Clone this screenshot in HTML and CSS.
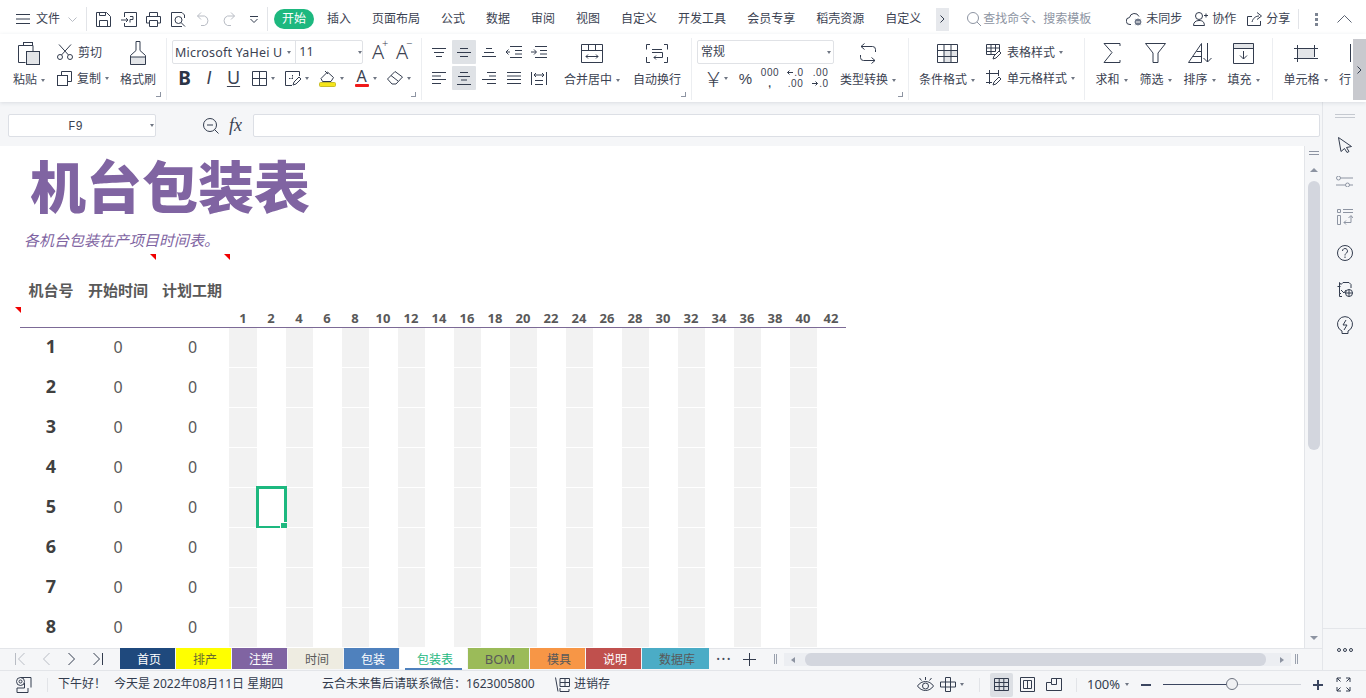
FILE: index.html
```html
<!DOCTYPE html>
<html lang="zh-CN">
<head>
<meta charset="utf-8">
<title>机台包装表</title>
<link rel="stylesheet" href="styles.css">
</head>
<body>
<div class="app">
  <header class="topbar">
    <svg class="i" width="14" height="10" viewBox="0 0 14 10"><path d="M0 .5h14M0 5h14M0 9.500h14"/></svg>
    <span class="file">文件</span>
    <svg class="i lite chev" width="9" height="5" viewBox="0 0 9 5"><path d="M.5.500l4 4 4-4"/></svg>
    <i class="vsep"></i>
    <div class="quick">
      <span class="q"><svg class="i" width="15" height="15" viewBox="0 0 15 15"><path d="M.5.500h10l4 4v10H.5zM3.500 14.500v-6h8v6M3.500.5v3h6v-3"/></svg></span>
      <span class="q"><svg class="i" width="16" height="15" viewBox="0 0 16 15"><path d="M3.500 5V.5h12v14h-12V11M0 8h7M5 6l2 2-2 2M9 4.500h3v3H9v3"/></svg></span>
      <span class="q"><svg class="i" width="15" height="15" viewBox="0 0 15 15"><path d="M3.500 4V.5h8V4M3.500 11H.5V4.500h14V11h-3M3.500 8.500h8v6h-8z"/></svg></span>
      <span class="q"><svg class="i" width="15" height="15" viewBox="0 0 15 15"><path d="M11 14.500H.5V.5h10.500l2.500 2.500v3"/><circle cx="7.500" cy="8" r="3.500"/><path d="M10 10.500l4 4"/></svg></span>
      <span class="q"><svg class="i lite" width="13" height="14" viewBox="0 0 13 14"><path d="M4 .5L.5 4 4 7.500M.5 4h7a5 5 0 0 1 0 9.500H4"/></svg></span>
      <span class="q"><svg class="i lite" width="13" height="14" viewBox="0 0 13 14"><path d="M9 .5L12.500 4 9 7.500M12.500 4h-7a5 5 0 0 0 0 9.500H9"/></svg></span>
      <span class="q"><svg class="i" width="8" height="7" viewBox="0 0 8 7"><path d="M0 .5h8M.5 3l3.500 3.500L7.500 3"/></svg></span>
    </div>
    <i class="vsep sep2"></i>
    <span class="pill">开始</span>
    <nav class="tabs-top">
      <span>插入</span><span>页面布局</span><span>公式</span><span>数据</span><span>审阅</span><span>视图</span><span>自定义</span><span>开发工具</span><span>会员专享</span><span>稻壳资源</span><span>自定义</span>
    </nav>
    <span class="more">
      <svg class="i" width="5" height="8" viewBox="0 0 5 8"><path d="M.5.500L4 4 .5 7.500"/></svg>
    </span>
    <div class="search">
      <svg class="i grey" width="14" height="14" viewBox="0 0 14 14"><circle cx="6" cy="6" r="5.500"/><path d="M10 10l4 4"/></svg>
      <span>查找命令、搜索模板</span>
    </div>
    <div class="share">
      <span class="act"><svg class="i" width="17" height="14" viewBox="0 0 17 14"><path d="M5 12.500H4a3.500 3.500 0 0 1-.5-7A5 5 0 0 1 13 4.500"/><circle class="solid" cx="12" cy="10" r="4"/><path class="wline" d="M10 10h4"/></svg><span>未同步</span></span>
      <span class="act act2"><svg class="i" width="15" height="14" viewBox="0 0 15 14"><circle cx="6" cy="4" r="3.500"/><path d="M.5 13.500c0-3 2-5 5.500-5s5 1 5.500 5zM11 3.500h4M13 1.500v4"/></svg><span>协作</span></span>
      <span class="act"><svg class="i" width="16" height="14" viewBox="0 0 16 14"><path d="M5 4.500H.5v9h13V9M5 10c1-4 4-6 7-6M10 .5l4.500 3.500L10 7.500"/></svg><span>分享</span></span>
    </div>
    <i class="vsep sep3"></i>
    <svg class="kebab" width="3" height="13" viewBox="0 0 3 13"><path d="M0 0h3v3H0zM0 5h3v3H0zM0 10h3v3H0z"/></svg>
    <svg class="i up" width="15" height="8" viewBox="0 0 15 8"><path d="M.5 7.500l7-7 7 7"/></svg>
  </header>

  <div class="ribbon">
    <section class="grp g-clip">
      <div class="big w-paste">
        <div class="big-ic"><svg class="i" width="22" height="23" viewBox="0 0 22 23"><path d="M5 3.500H.5v17h7M15 3.500V9"/><rect x="5.500" y=".5" width="9" height="3"/><rect class="tint" x="8.500" y="9.500" width="13" height="13"/></svg></div>
        <div class="big-lb">粘贴<b class="car"></b></div>
      </div>
      <div class="small-col w-copy">
        <div class="small"><svg class="i" width="16" height="16" viewBox="0 0 16 16"><circle cx="3" cy="13" r="2.500"/><circle cx="13" cy="13" r="2.500"/><path d="M4.500 11L14 .5M11.500 11L2 .5"/></svg><span>剪切</span></div>
        <div class="small"><svg class="i" width="15" height="15" viewBox="0 0 15 15"><path d="M4.500 4V.5h10v10H11"/><rect x=".5" y="4.500" width="10" height="10"/></svg><span>复制</span><b class="car"></b></div>
      </div>
      <div class="big w-brush">
        <div class="big-ic"><svg class="i" width="18" height="24" viewBox="0 0 18 24"><rect class="tint-b" x="1" y="16" width="16" height="8"/><path d="M7 .5h4v9l5.500 5v9H1.500v-9l5.500-5zM1.500 16h15"/></svg></div>
        <div class="big-lb">格式刷</div>
      </div>
      <i class="corner"></i>
    </section>

    <section class="grp g-font">
      <div class="line">
        <div class="combo combo-font">
          <span class="c-name">Microsoft YaHei U</span><b class="car"></b>
          <span class="c-size">11</span><b class="car"></b>
        </div>
        <span class="aa aa1">A<sup>+</sup></span>
        <span class="aa">A<sup>−</sup></span>
      </div>
      <div class="line tools">
        <span class="t t-b">B</span>
        <span class="t t-i">I</span>
        <span class="t t-u">U</span>
        <span class="t"><svg class="i" width="15" height="15" viewBox="0 0 15 15"><path d="M.5.500h14v14H.5zM7.500.5v14M.5 7.500h14"/></svg><b class="car"></b></span>
        <span class="t"><svg class="i" width="16" height="15" viewBox="0 0 16 15"><path d="M14.500 5V.5H.5v14H7"/><path d="M4 7.500h5M7.500 4v5" stroke-dasharray="1.500 1"/><path d="M8 14l1-3 5-5 2 2-5 5z"/></svg><b class="car"></b></span>
        <span class="t"><svg class="i" width="17" height="17" viewBox="0 0 17 17"><path d="M2 8.500L8.500 2l6 5.500-2.500 4H3.500zM6 1l3 3"/><rect class="yellow" x=".5" y="12.500" width="16" height="4" rx="1"/></svg><b class="car"></b></span>
        <span class="t"><span class="fc">A<i></i></span><b class="car"></b></span>
        <span class="t"><svg class="i" width="16" height="14" viewBox="0 0 16 14"><path d="M.5 8L8 .5 15.500 6 9 13H5zM4 4.500L11 10"/></svg><b class="car"></b></span>
      </div>
      <i class="corner"></i>
    </section>

    <section class="grp g-align">
      <div class="agrid">
        <span class="a"><svg class="i" width="14" height="9" viewBox="0 0 14 9"><path d="M0 .5h14M2 4.500h10M4 8.500h6"/></svg></span>
        <span class="a on"><svg class="i" width="14" height="9" viewBox="0 0 14 9"><path d="M3 .5h8M0 4.500h14M3 8.500h8"/></svg></span>
        <span class="a"><svg class="i" width="14" height="9" viewBox="0 0 14 9"><path d="M4 .5h6M2 4.500h10M0 8.500h14"/></svg></span>
        <span class="a"><svg class="i" width="16" height="12" viewBox="0 0 16 12"><path d="M4 .5h12M9 4.500h7M9 8h7M4 11.500h12M4 6H0M2.500 3.500L0 6l2.500 2.500"/></svg></span>
        <span class="a"><svg class="i" width="16" height="12" viewBox="0 0 16 12"><path d="M4 .5h12M9 4.500h7M9 8h7M4 11.500h12M0 6h5M3 3.500L5.500 6 3 8.500"/></svg></span>
        <span class="a"><svg class="i" width="14" height="12" viewBox="0 0 14 12"><path d="M0 .5h14M0 4h9M0 7.500h14M0 11.500h9"/></svg></span>
        <span class="a on"><svg class="i" width="14" height="13" viewBox="0 0 14 13"><path d="M3 .5h8M1 4.500h12M4 8h6M0 12.500h14"/></svg></span>
        <span class="a"><svg class="i" width="14" height="12" viewBox="0 0 14 12"><path d="M5 .5h9M7 4h7M0 7.500h14M5 11.500h9"/></svg></span>
        <span class="a"><svg class="i" width="14" height="12" viewBox="0 0 14 12"><path d="M0 .5h14M0 4h14M0 7.500h14M0 11.500h14"/></svg></span>
        <span class="a"><svg class="i" width="16" height="13" viewBox="0 0 16 13"><path d="M.5 0v13M15.500 0v13M4 12.500h8M4 8.500h8M3 3h10M5 1L3 3l2 2M11 1l2 2-2 2"/></svg></span>
      </div>
      <div class="big w-merge">
        <div class="big-ic"><svg class="i" width="22" height="19" viewBox="0 0 22 19"><path d="M.5.500h21v18H.5zM.5 6.500h21M7.500.5v6M14.500.5v6M5 12.500h12M7 10.500l-2 2 2 2M15 10.500l2 2-2 2"/></svg></div>
        <div class="big-lb">合并居中<b class="car"></b></div>
      </div>
      <div class="big w-wrap">
        <div class="big-ic"><svg class="i" width="22" height="19" viewBox="0 0 22 19"><path d="M4 .5H.5v5M18 .5h3.500v5M.5 13v5.500H4M21.500 13v5.500H18M6 5.500h10M6 8.500h10.500v5H8M10 11.500l-2 2 2 2"/></svg></div>
        <div class="big-lb">自动换行</div>
      </div>
      <i class="corner"></i>
    </section>

    <section class="grp g-num">
      <div class="num-left">
        <div class="combo combo-num"><span>常规</span><b class="car"></b></div>
        <div class="line numtools">
          <span class="t yen">￥<b class="car"></b></span>
          <span class="t pct">%</span>
          <span class="t stack s-k"><em>000</em><em>,</em></span>
          <span class="t stack"><em><svg class="i arr" width="6" height="5" viewBox="0 0 6 5"><path d="M6 2.500H.5M2.500.5l-2 2 2 2"/></svg>.0</em><em>.00</em></span>
          <span class="t stack"><em>.00</em><em><svg class="i arr" width="6" height="5" viewBox="0 0 6 5"><path d="M0 2.500h5.500M3.500.5l2 2-2 2"/></svg>.0</em></span>
        </div>
      </div>
      <div class="big w-conv">
        <div class="big-ic"><svg class="i" width="18" height="21" viewBox="0 0 18 21"><path d="M16.500 9V6.500a3 3 0 0 0-3-3H2M5.500.5l-3.500 3 3.500 3M1.500 12v2.500a3 3 0 0 0 3 3H16M12.500 14.500l3.500 3-3.500 3"/></svg></div>
        <div class="big-lb">类型转换<b class="car"></b></div>
      </div>
      <i class="corner"></i>
    </section>

    <section class="grp g-style">
      <div class="big w-cond">
        <div class="big-ic"><svg class="i" width="21" height="19" viewBox="0 0 21 19"><rect class="tint-b" x="7" y="6" width="14" height="6"/><rect class="tint-b" x="7" y="12" width="7" height="6"/><path d="M.5.500h20v18H.5zM.5 6.500h20M.5 12.500h20M7 .5v18M14 .5v18"/></svg></div>
        <div class="big-lb">条件格式<b class="car"></b></div>
      </div>
      <div class="small-col w-tstyle">
        <div class="small"><svg class="i" width="16" height="16" viewBox="0 0 16 16"><path d="M10 10.500H.5V.5h13v7M.5 4h13M.5 7.500h9M5 .5v10M9.500.5v7"/><path d="M7 15l1-3 5-5 2 2-5 5z"/></svg><span>表格样式</span><b class="car"></b></div>
        <div class="small"><svg class="i" width="16" height="16" viewBox="0 0 16 16"><path d="M3.500 0v14M0 3.500h12M12.500 0v6M0 12.500h6M7 15l1-3 5-5 2 2-5 5z"/></svg><span>单元格样式</span><b class="car"></b></div>
      </div>
    </section>

    <section class="grp g-edit">
      <div class="big w-edit">
        <div class="big-ic"><svg class="i" width="18" height="20" viewBox="0 0 18 20"><path d="M17 3V.5H1l8 9-8 10h16V17"/></svg></div>
        <div class="big-lb">求和<b class="car"></b></div>
      </div>
      <div class="big w-edit">
        <div class="big-ic"><svg class="i" width="21" height="20" viewBox="0 0 21 20"><path d="M.5.500h20L13 10v9.500H8V10z"/></svg></div>
        <div class="big-lb">筛选<b class="car"></b></div>
      </div>
      <div class="big w-edit">
        <div class="big-ic"><svg class="i" width="24" height="20" viewBox="0 0 24 20"><path d="M.5 19.500L13.500.5v19zM5 13.500h8M8.500 8.500h5M19.500 0v19M15.500 15l4 4 4-4"/></svg></div>
        <div class="big-lb">排序<b class="car"></b></div>
      </div>
      <div class="big w-edit">
        <div class="big-ic"><svg class="i" width="21" height="21" viewBox="0 0 21 21"><rect class="tint-b" x="0" y="0" width="21" height="5"/><path d="M.5.500h20v20H.5zM.5 5.500h20M10.500 8v8M7 12.500l3.500 3.500 3.500-3.500"/></svg></div>
        <div class="big-lb">填充<b class="car"></b></div>
      </div>
    </section>

    <section class="grp g-cell">
      <div class="big w-cell">
        <div class="big-ic"><svg class="i" width="24" height="17" viewBox="0 0 24 17"><rect class="tint-b" x="4" y="3" width="16" height="11"/><path d="M3.500 0v17M20.500 0v12M0 3.500h24M0 13.500h24"/></svg></div>
        <div class="big-lb">单元格<b class="car"></b></div>
      </div>
      <div class="big w-row">
        <div class="big-ic ic-left"><i class="rowbar"></i></div>
        <div class="big-lb">行</div>
      </div>
    </section>
    <span class="rib-next"><svg class="i" width="5" height="8" viewBox="0 0 5 8"><path d="M.5.500L4 4 .5 7.500"/></svg></span>
  </div>

  <div class="middle">
    <div class="work">
      <div class="fbar">
        <div class="namebox"><span>F9</span><b class="car"></b></div>
        <svg class="i f-zoom" width="16" height="16" viewBox="0 0 16 16"><circle cx="7" cy="7" r="6.500"/><path d="M4 7h6M11.500 11.500l4 4"/></svg>
        <span class="fx">fx</span>
        <div class="finput"></div>
      </div>

      <div class="sheetwrap">
        <main class="sheet">
          <h1 class="title">机台包装表</h1>
          <p class="subtitle">各机台包装在产项目时间表。</p>
          <i class="mark m1"></i><i class="mark m2"></i><i class="mark m3"></i>
          <div class="heads"><span>机台号</span><span>开始时间</span><span>计划工期</span></div>
          <div class="days">
            <span>1</span><span>2</span><span>4</span><span>6</span><span>8</span><span>10</span><span>12</span><span>14</span><span>16</span><span>18</span><span>20</span><span>22</span><span>24</span><span>26</span><span>28</span><span>30</span><span>32</span><span>34</span><span>36</span><span>38</span><span>40</span><span>42</span>
          </div>
          <div class="row"><b>1</b><span>0</span><span>0</span><i class="band"></i></div>
          <div class="row"><b>2</b><span>0</span><span>0</span><i class="band"></i></div>
          <div class="row"><b>3</b><span>0</span><span>0</span><i class="band"></i></div>
          <div class="row"><b>4</b><span>0</span><span>0</span><i class="band"></i></div>
          <div class="row"><b>5</b><span>0</span><span>0</span><i class="band"></i><i class="cursor"></i></div>
          <div class="row"><b>6</b><span>0</span><span>0</span><i class="band"></i></div>
          <div class="row"><b>7</b><span>0</span><span>0</span><i class="band"></i></div>
          <div class="row"><b>8</b><span>0</span><span>0</span><i class="band"></i></div>
        </main>
        <aside class="vbar">
          <i class="vhandle"></i>
          <i class="tri-up"></i>
          <i class="vthumb"></i>
          <i class="tri-down"></i>
        </aside>
      </div>

      <div class="tabbar">
        <div class="navs">
          <svg class="i lite" width="10" height="12" viewBox="0 0 10 12"><path d="M.5 0v12M9.500 0L3.500 6l6 6"/></svg>
          <svg class="i lite" width="7" height="12" viewBox="0 0 7 12"><path d="M6.500 0L.5 6l6 6"/></svg>
          <svg class="i" width="7" height="12" viewBox="0 0 7 12"><path d="M.5 0l6 6-6 6"/></svg>
          <svg class="i" width="10" height="12" viewBox="0 0 10 12"><path d="M9.500 0v12M.5 0l6 6-6 6"/></svg>
        </div>
        <div class="stabs">
          <span class="st s-navy">首页</span>
          <span class="st s-yellow">排产</span>
          <span class="st s-purple">注塑</span>
          <span class="st s-cream">时间</span>
          <span class="st s-blue">包装</span>
          <span class="st s-active">包装表</span>
          <span class="st s-green">BOM</span>
          <span class="st s-orange">模具</span>
          <span class="st s-red">说明</span>
          <span class="st s-teal">数据库</span>
        </div>
        <span class="tdots">···</span>
        <svg class="i addtab" width="13" height="13" viewBox="0 0 13 13"><path d="M6.500 0v13M0 6.500h13"/></svg>
        <i class="grip grip1"></i>
        <div class="hbar">
          <i class="tri-left"></i>
          <i class="hthumb"></i>
          <i class="tri-right"></i>
        </div>
        <i class="grip grip2"></i>
      </div>
    </div>

    <aside class="rpanel">
      <i class="rlines"></i>
      <span class="r"><svg class="i" width="14" height="16" viewBox="0 0 14 16"><path d="M.5.500l13 9-5 1 2.500 4-2 1-2.500-4-3.500 3z"/></svg></span>
      <span class="r"><svg class="i grey" width="17" height="11" viewBox="0 0 17 11"><circle cx="2.500" cy="2" r="2"/><circle cx="11.500" cy="9" r="2"/><path d="M4.500 2H17M0 9h9.500M13.500 9H17"/></svg></span>
      <span class="r"><svg class="i grey" width="16" height="16" viewBox="0 0 16 16"><path d="M.5.500h3v3h-3zM.5 6.500h3v9h-3zM6 .5h10M6 3.500h10M7 13.500h7V7M11.500 9L14 6.500 16 9M9 11.500l-2 2 2 2"/></svg></span>
      <span class="r"><svg class="i" width="16" height="16" viewBox="0 0 16 16"><circle cx="8" cy="8" r="7.500"/><path d="M5.500 6a2.500 2.500 0 1 1 4 2c-1 .7-1.500 1.300-1.500 2.500M8 11.500V13"/></svg></span>
      <span class="r"><svg class="i" width="16" height="16" viewBox="0 0 16 16"><path d="M4 12.500H2.500V1.500l1.500 2 2-2h6l2 2V7M.5 5.500h3M5 15.500H2.500v-3M4 9l3 3 2-3"/><circle cx="12" cy="12" r="3.500"/><path d="M12 8.500v7M8.500 12h7"/></svg></span>
      <span class="r"><svg class="i" width="16" height="18" viewBox="0 0 16 18"><path d="M5 15a7.500 7.500 0 1 1 6 0v2.500H5zM9 4L6 9h4l-3 5"/></svg></span>
      <div class="rfoot"><svg class="i" width="16" height="4" viewBox="0 0 16 4"><circle cx="2" cy="2" r="1.500"/><circle cx="8" cy="2" r="1.500"/><circle cx="14" cy="2" r="1.500"/></svg></div>
    </aside>
  </div>

  <footer class="status">
    <svg class="i s-icon" width="16" height="16" viewBox="0 0 16 16"><circle cx="4.500" cy="4.500" r="4"/><circle cx="4.500" cy="4.500" r="1.500"/><path d="M4.500.5H15v10M8.500 6v5H1v4.500h11V11"/></svg>
    <i class="vsep s1"></i>
    <span class="greet">下午好！</span>
    <span class="today">今天是 2022年08月11日 星期四</span>
    <span class="contact">云合未来售后请联系微信：1623005800</span>
    <svg class="i s-cart" width="15" height="15" viewBox="0 0 15 15"><path d="M.5.500L3 14.500M5 1.500h9.500v8H5zM10 1.500v8M5 5.500h9.500M5 11v3.500h9V12"/></svg>
    <span class="jxc">进销存</span>
    <div class="s-right">
      <svg class="i" width="17" height="15" viewBox="0 0 17 15"><path d="M.5 9c4-6 12-6 16 0-4 6-12 6-16 0z"/><circle cx="8.500" cy="9" r="3"/><path d="M8.500 0v3M2.500 1l2 2.500M14.500 1l-2 2.500"/></svg>
      <span class="cross"><svg class="i" width="16" height="15" viewBox="0 0 16 15"><path d="M5.500.5h5v4.500H15.500v5h-5v4.500h-5V10H.5V5h5zM5.500 5h5v5h-5z"/></svg><b class="car"></b></span>
      <i class="vsep s2"></i>
      <span class="view on"><svg class="i" width="15" height="13" viewBox="0 0 15 13"><path d="M.5.500h14v12H.5zM.5 4.500h14M.5 8.500h14M5.200.5v12M9.800.5v12"/></svg></span>
      <span class="view"><svg class="i" width="15" height="15" viewBox="0 0 15 15"><path d="M.5.500h14v14H.5zM3.500 3.500h8v8h-8zM7.500 3.500v8"/></svg></span>
      <span class="view"><svg class="i" width="16" height="13" viewBox="0 0 16 13"><path d="M.5 4.500h5v-4h10v12H.5zM10.500.5v6h-5v-2"/></svg></span>
      <i class="vsep s3"></i>
      <span class="zoomtxt">100%</span><b class="car"></b>
      <i class="zminus"></i>
      <div class="slider"><i class="knob"></i></div>
      <i class="zplus"></i>
      <svg class="i full" width="15" height="15" viewBox="0 0 15 15"><path d="M1 5V1h4M10 1h4v4M1 10v4h4M14 10v4h-4M1 1l3.500 3.500M14 1l-3.500 3.500M1 14l3.500-3.500M14 14l-3.500-3.500"/></svg>
    </div>
  </footer>
</div>
</body>
</html>
```

FILE: styles.css
```css
* { box-sizing: border-box; }
html, body { margin: 0; padding: 0; height: 100%; overflow: hidden; background: #fff; }
body { font: 12px/1.2 "Noto Sans", "Noto Sans CJK SC", sans-serif; color: #3b4252; }
i, em { font-style: normal; }
b.car { display: inline-block; flex: none; width: 0; height: 0; margin-left: 4px; border-style: solid; border-width: 3px 2.500px 0; border-color: #6f7683 transparent transparent; }

.app { width: 1366px; height: 698px; display: flex; flex-direction: column; overflow: hidden; }

.i { fill: none; stroke: #333c4e; stroke-width: 1; flex: none; display: block; }
.i.lite { stroke: #b8bcc4; }
.i.grey { stroke: #8d94a2; }
.tint { fill: #e3e5e8; stroke: #333c4e; }
.tint-b { fill: #e3e5e8; stroke: none; }
.yellow { fill: #f5e51b; stroke: #c9bd2a; }
.solid { fill: #70798a; stroke: #fff; }
.wline { stroke: #fff; }

/* top bar */
.topbar { height: 34px; flex: none; display: flex; align-items: center; padding-left: 16px; background: #fff; white-space: nowrap; padding-top: 4px; }
.file { margin-left: 6px; width: 24px; }
.chev { margin-left: 8px; }
.vsep { display: block; flex: none; width: 1px; height: 24px; background: #e2e4e8; margin-left: 9px; }
.quick { display: flex; margin-left: 4px; }
.q { width: 25px; display: flex; justify-content: center; align-items: center; }
.sep2 { margin-left: 1px; }
.pill { margin-left: 6px; width: 40px; height: 20px; line-height: 20px; border-radius: 10px; background: #1db87f; color: #fff; text-align: center; }
.tabs-top { display: flex; gap: 21px; margin-left: 13px; }
.more { margin-left: 15px; width: 13px; height: 23px; background: #e6e8ec; display: flex; align-items: center; justify-content: center; }
.search { display: flex; align-items: center; gap: 2px; margin-left: 18px; color: #8d94a2; width: 124px; }
.share { display: flex; gap: 11px; margin-left: 35px; }
.act { display: flex; align-items: center; gap: 3px; }
.act2 { gap: 4px; }
.sep3 { margin-left: 8px; height: 20px; }
.kebab { margin-left: 16px; fill: #7c8492; flex: none; }
.up { margin-left: 19px; stroke: #5b6372; }

/* ribbon */
.ribbon { position: relative; z-index: 2; height: 68px; flex: none; padding-top: 4px; display: flex; background: #fff; box-shadow: 0 1px 4px rgba(60, 70, 90, .14); overflow: hidden; }
.grp { position: relative; height: 62px; padding-top: 2px; display: flex; flex: none; border-right: 1px solid #eceef1; }
.corner { position: absolute; right: 5px; bottom: 3px; width: 5px; height: 5px; border-right: 1px solid #8d94a2; border-bottom: 1px solid #8d94a2; }
.g-clip { width: 167px; padding-left: 13px; }
.g-font { width: 255px; padding-left: 5px; display: block; }
.g-align { width: 270px; padding-left: 5px; }
.g-num { width: 217px; padding-left: 5px; }
.g-style { width: 176px; padding-left: 10px; }
.g-edit { width: 188px; padding-left: 10px; gap: 11px; }
.g-cell { padding-left: 10px; border-right: 0; gap: 11px; flex: 1; }

.big { display: flex; flex-direction: column; align-items: center; flex: none; }
.big-ic { height: 26px; display: flex; align-items: center; justify-content: center; }
.big-lb { height: 26px; padding-top: 2px; display: flex; align-items: center; white-space: nowrap; }
.w-paste { width: 32px; }
.w-copy { width: 53px; margin-left: 12px; }
.w-brush { width: 36px; margin-left: 10px; }
.small-col { display: flex; flex-direction: column; gap: 2px; flex: none; }
.small { height: 24px; display: flex; align-items: center; white-space: nowrap; }
.small span { margin-left: 5px; padding-top: 2px; }
.small svg { flex: none; }

.line { display: flex; align-items: center; height: 24px; }
.tools { margin-top: 2px; display: grid; grid-template-columns: 25px 24px 25px 34px 34px 35px 33px 34px; }
.t { display: flex; align-items: center; justify-content: center; height: 24px; }
.combo { display: flex; align-items: center; height: 24px; background: #fff; border: 1px solid #e0e2e6; border-radius: 2px; }
.combo-font { width: 191px; padding-left: 2px; }
.c-name { font-size: 12.500px; width: 109px; white-space: nowrap; letter-spacing: .2px; }
.c-size { width: 59px; margin-left: 4px; padding-left: 3px; border-left: 1px solid #e0e2e6; line-height: 22px; font-size: 12.500px; }
.aa { font-size: 20px; line-height: 24px; width: 16px; margin-left: 8px; color: #3b4252; position: relative; font-weight: 300; }
.aa1 { margin-left: 9px; }
.aa sup { position: absolute; left: 10px; top: -5px; font-size: 11px; line-height: 16px; }
.t-b { font-size: 19px; font-weight: 700; color: #2c3546; }
.t-i { font: italic 18px "Liberation Sans", sans-serif; }
.t-u { font-size: 18px; text-decoration: underline; text-underline-offset: 2px; text-decoration-thickness: 1px; }
.fc { display: block; width: 14px; font-size: 16px; line-height: 15px; text-align: center; position: relative; height: 18px; }
.fc i { position: absolute; left: 0; bottom: 0; width: 14px; height: 3px; background: #f01a1a; border-radius: 1px; }

.agrid { display: grid; grid-template-columns: repeat(5, 24px); grid-auto-rows: 24px; gap: 2px 1px; flex: none; }
.a { display: flex; align-items: center; justify-content: center; border-radius: 1px; }
.a.on { background: #dfe2e6; }
.w-merge { width: 56px; margin-left: 13px; }
.w-wrap { width: 48px; margin-left: 13px; }

.num-left { width: 137px; flex: none; }
.combo-num { padding-left: 3px; justify-content: space-between; padding-right: 2px; }
.numtools { margin-top: 2px; display: grid; grid-template-columns: 37px 23px 26px 25px 25px; }
.yen { font: 300 20px "Noto Sans CJK SC", sans-serif; }
.yen b.car { margin-left: 0; }
.pct { font: 15px "Liberation Sans", sans-serif; }
.stack { flex-direction: column; font: 10px/11px "Liberation Sans", sans-serif; letter-spacing: .6px; }
.stack em { display: flex; align-items: center; }
.arr { margin-right: 1px; }
.s-k em:last-child { font-weight: 700; }
.w-conv { width: 56px; margin-left: 6px; }
.w-cond { width: 56px; }
.w-tstyle { margin-left: 11px; width: 89px; }
.w-edit { width: 33px; }
.w-cell { width: 45px; }
.w-row { width: 14px; align-items: flex-start; }
.rowbar { display: block; width: 1px; height: 18px; background: #333c4e; margin-left: 11px; }
.rib-next { position: absolute; right: 0; top: 5px; width: 13px; height: 61px; background: #c8c9ce; display: flex; align-items: center; justify-content: center; }

/* middle */
.middle { flex: 1; min-height: 0; display: flex; background: #f5f6f8; }
.work { width: 1322px; flex: none; display: flex; flex-direction: column; }
.fbar { height: 44px; flex: none; display: flex; align-items: flex-start; padding: 12px 2px 0 8px; }
.namebox { width: 148px; height: 23px; background: #fff; border: 1px solid #dcdfe5; border-radius: 2px; display: flex; align-items: center; padding: 0 1px 0 0; }
.namebox span { flex: 1; text-align: center; font: 12px "Liberation Mono", monospace; padding: 3px 4px 0 0; }
.f-zoom { margin: 4px 0 0 47px; }
.fx { width: 16px; margin: 0 0 0 10px; font: italic 18px/23px "Liberation Serif", serif; }
.finput { flex: 1; height: 23px; margin-left: 8px; background: #fff; border: 1px solid #dcdfe5; border-radius: 2px; }

.sheetwrap { flex: 1; min-height: 0; display: flex; }
.sheet { position: relative; width: 1304px; flex: none; background: #fff; }
.title { margin: 0; height: 82px; padding-left: 30px; font: 900 56px/76px "Noto Sans CJK SC", sans-serif; color: #8064a2; white-space: nowrap; }
.subtitle { margin: 0; height: 24px; padding-left: 24px; font: italic 15px/24px "Noto Sans CJK SC", sans-serif; color: #8064a2; white-space: nowrap; }
.mark { position: absolute; width: 0; height: 0; border-style: solid; border-width: 0 6px 6px 0; border-color: transparent #f00000 transparent transparent; }
.m1 { left: 150px; top: 108px; }
.m2 { left: 224px; top: 108px; }
.m3 { left: 15px; top: 161px; }
.heads { margin-top: 26px; height: 26px; padding-left: 20px; display: grid; grid-template-columns: 62px 72px 76px; font: 700 15px/24px "Noto Sans CJK SC", sans-serif; color: #595959; text-align: center; white-space: nowrap; }
.days { height: 24px; margin-left: 20px; width: 826px; padding: 3px 0 0 209px; border-bottom: 1px solid #7c6a96; display: grid; grid-template-columns: repeat(22, 28px); font-weight: 700; font-size: 13px; line-height: 23px; color: #595959; text-align: center; }
.row { position: relative; height: 40px; padding-left: 20px; display: grid; grid-template-columns: 62px 72px 75px 588px; align-items: center; text-align: center; font-size: 16px; color: #595959; border-bottom: 1px solid #fff; }
.row b { font-size: 18px; color: #404040; margin-top: -2px; }
.row span:nth-child(3) { padding-left: 2px; }
.band { align-self: stretch; background: linear-gradient(#f2f2f2, #f2f2f2) 0 0 / 1px 100% no-repeat, linear-gradient(90deg, #f2f2f2 27px, #fff 27px) 1px 0 / 56px 100%; }
.cursor { position: absolute; left: 256px; top: -2px; width: 31px; height: 43px; border: 3px solid #1db87f; }
.cursor::after { content: ""; position: absolute; right: -3px; bottom: -3px; width: 6px; height: 6px; background: #1db87f; border: 1px solid #fff; border-width: 1px 0 0 1px; }

.vbar { flex: 1; position: relative; display: flex; flex-direction: column; align-items: center; border-left: 1px solid #e3e5e9; padding-top: 5px; padding-left: 1px; }
.vhandle { display: block; width: 10px; height: 4px; border-top: 1px solid #8d94a2; border-bottom: 1px solid #8d94a2; }
.tri-up { margin-top: 13px; width: 0; height: 0; border: solid transparent; border-width: 0 4px 4px; border-bottom-color: #8d94a2; }
.vthumb { display: block; margin-top: 9px; width: 12px; height: 269px; border-radius: 6px; background: #d3d6de; }
.tri-down { margin-top: auto; margin-bottom: 8px; width: 0; height: 0; border: solid transparent; border-width: 4px 4px 0; border-top-color: #8d94a2; }

/* sheet tabs */
.tabbar { height: 22px; flex: none; display: flex; align-items: stretch; border-top: 1px solid #e3e5e9; }
.navs { width: 120px; flex: none; display: flex; align-items: center; gap: 18px; padding-left: 15px; margin-top: -1px; }
.stabs { display: flex; height: 21px; gap: 1px; flex: none; margin-top: -1px; }
.st { position: relative; width: 55px; text-align: center; line-height: 21px; color: #fff; padding: 1px 0 0 3px; }
.s-navy { background: #1f497d; }
.s-yellow { background: #ff0; color: #6b6b30; }
.s-purple { background: #8064a2; }
.s-cream { background: #eeece1; color: #595959; }
.s-blue { background: #4f81bd; }
.s-active { width: 67px; background: #fff; color: #1db87f; }
.s-active::after { content: ""; position: absolute; left: 5px; right: 5px; bottom: -1px; height: 2px; background: #4f81bd; }
.s-green { width: 61px; background: #9bbb59; color: #595959; font-size: 13px; }
.s-orange { background: #f79646; color: #595959; }
.s-red { background: #c0504d; }
.s-teal { width: 67px; background: #4bacc6; color: #595959; }
.tdots { width: 14px; margin-left: 7px; font-size: 16px; line-height: 20px; letter-spacing: 1px; color: #454d5e; white-space: nowrap; }
.addtab { margin: 4px 0 0 13px; }
.grip { display: block; flex: none; width: 3px; height: 10px; margin-top: 5px; border-left: 1px solid #9aa1ae; border-right: 1px solid #9aa1ae; }
.grip1 { margin-left: 18px; }
.hbar { width: 507px; height: 13px; margin: 4px 0 0 7px; flex: none; background: #eceef2; display: flex; align-items: center; padding-left: 7px; }
.tri-left { width: 0; height: 0; border: solid transparent; border-width: 3.500px 4px 3.500px 0; border-right-color: #8d94a2; flex: none; }
.hthumb { display: block; flex: none; width: 461px; height: 13px; margin-left: 10px; border-radius: 6px; background: #d3d6de; }
.tri-right { width: 0; height: 0; margin-left: 14px; border: solid transparent; border-width: 3.500px 0 3.500px 4px; border-left-color: #8d94a2; flex: none; }
.grip2 { margin-left: 4px; }

/* right panel */
.rpanel { flex: 1; display: flex; flex-direction: column; align-items: center; border-left: 1px solid #e4e6ea; padding-top: 12px; }
.rlines { display: block; width: 20px; height: 4px; border-top: 1px solid #c5c9d0; border-bottom: 1px solid #c5c9d0; margin-bottom: 9px; flex: none; }
.r { height: 36px; width: 100%; display: flex; align-items: center; justify-content: center; flex: none; }
.rfoot { margin-top: auto; width: 100%; height: 42px; border-top: 1px solid #e4e6ea; display: flex; align-items: center; justify-content: center; }

/* status */
.status { height: 28px; flex: none; display: flex; align-items: center; background: #f5f6f8; border-top: 1px solid #e3e5e9; padding-left: 16px; white-space: nowrap; color: #333c4e; }
.status .vsep.s1 { height: 14px; margin-left: 15px; }
.greet { margin-left: 10px; width: 47px; }
.today { margin-left: 9px; width: 172px; }
.contact { margin-left: 36px; width: 214px; }
.s-cart { margin-left: 19px; }
.jxc { margin-left: 4px; }
.s-right { margin-left: auto; display: flex; align-items: center; padding-right: 15px; }
.cross { display: flex; align-items: center; margin-left: 6px; }
.status .vsep.s2 { height: 14px; margin: 0 10px 0 15px; }
.view { width: 23px; height: 24px; display: flex; align-items: center; justify-content: center; margin-right: 3px; border-radius: 2px; }
.view.on { background: #dcdfe4; }
.status .vsep.s3 { height: 14px; margin: 0 10px 0 8px; }
.zoomtxt { font-size: 13px; width: 34px; }
.zminus { display: block; width: 10px; height: 2px; margin-left: 12px; background: #3b4660; }
.slider { position: relative; width: 138px; height: 1px; margin-left: 12px; background: linear-gradient(90deg, #3b4660 50%, #cfd2d9 50%); }
.knob { position: absolute; left: 63px; top: -6px; width: 12px; height: 12px; border-radius: 50%; background: #f0f1f3; border: 1px solid #6d7380; }
.zplus { display: block; position: relative; width: 10px; height: 10px; margin-left: 12px; background: linear-gradient(#3b4660, #3b4660) center / 10px 2px no-repeat, linear-gradient(#3b4660, #3b4660) center / 2px 10px no-repeat; }
.full { margin-left: 13px; }
```
